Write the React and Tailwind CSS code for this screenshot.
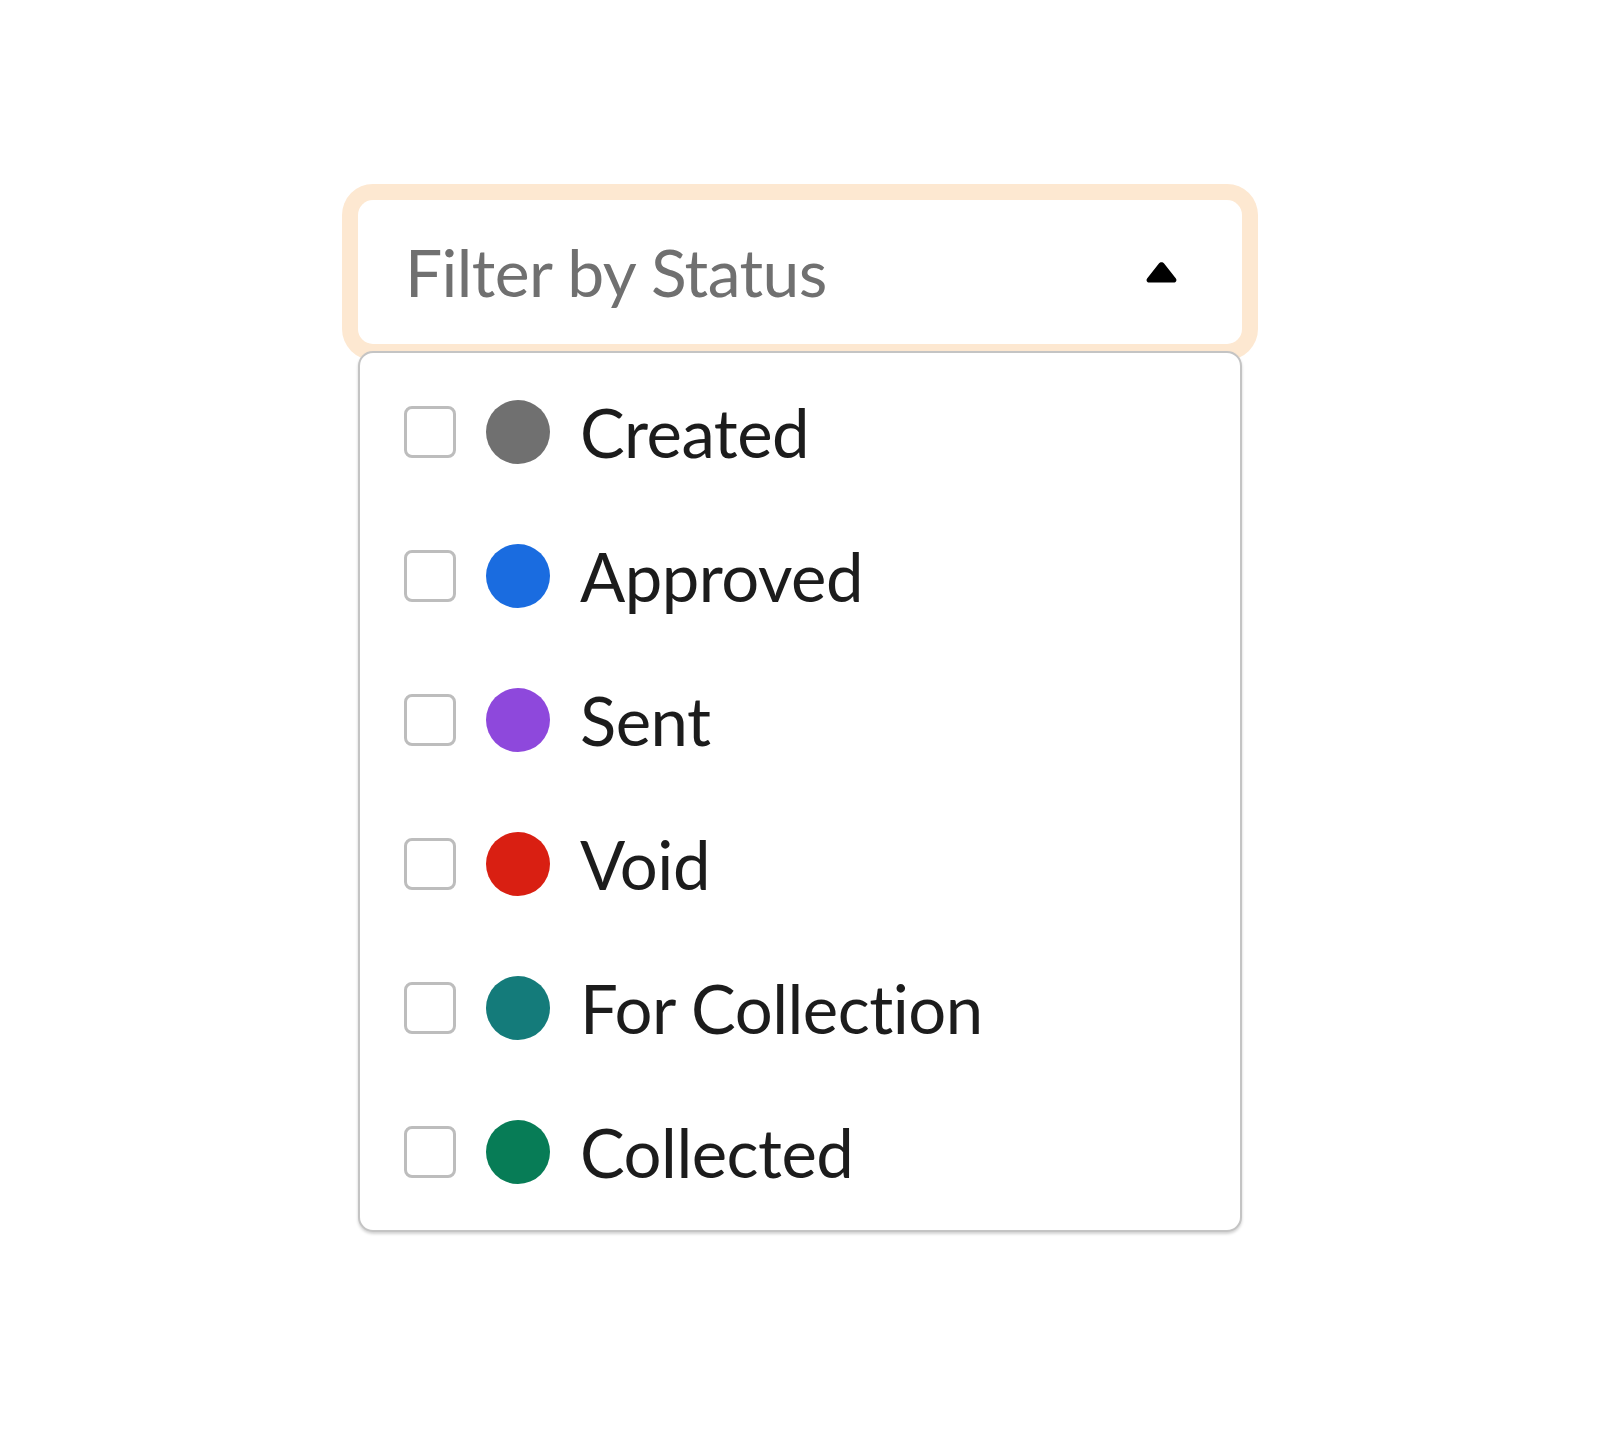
import { useState } from 'react';

const statuses = [
    { label: 'Created', color: 'bg-[#707070]' },
    { label: 'Approved', color: 'bg-[#1a6ce0]' },
    { label: 'Sent', color: 'bg-[#8e48dc]' },
    { label: 'Void', color: 'bg-[#d91f12]' },
    { label: 'For Collection', color: 'bg-[#147b7a]' },
    { label: 'Collected', color: 'bg-[#077c56]' },
];

const CaretUp = () => (
    <svg width="33" height="23" viewBox="0 0 33 23" className="block">
        <path
            d="M13.9 2.4c1.3-1.7 3.9-1.7 5.2 0l11.8 15c1.3 1.7.1 4.2-2.1 4.2H4.2c-2.2 0-3.4-2.5-2.1-4.2z"
            fill="#000"
        />
    </svg>
);

const App = () => {
    const [checked, setChecked] = useState({});

    const toggle = (label) => {
        setChecked((value) => ({ ...value, [label]: !value[label] }));
    };

    return (
        <div className="min-h-[1432px] w-full bg-white font-['Lato',sans-serif] pt-[200px] pl-[358px]">
            <div className="w-[884px] flex flex-col gap-[7px]">
                <button
                    type="button"
                    className="h-[144px] w-full flex items-center justify-between pl-[47px] pr-[64px] bg-white rounded-[15px] shadow-[0_0_0_16px_#fde8d1]"
                >
                    <span className="text-[66px] leading-none text-[#707070] tracking-[-0.6px]">Filter by Status</span>
                    <CaretUp />
                </button>
                <ul className="relative w-full pt-[7px] pb-[6px] bg-white border-2 border-[#c4c4c4] rounded-[15px] shadow-[0_2px_3px_rgba(0,0,0,0.18)]">
                    {statuses.map((status) => (
                        <li key={status.label}>
                            <label className="h-[144px] flex items-center pl-[44px] cursor-pointer">
                                <input
                                    type="checkbox"
                                    checked={!!checked[status.label]}
                                    onChange={() => toggle(status.label)}
                                    className="appearance-none w-[52px] h-[52px] border-[3px] border-[#bdbdbd] rounded-[8px] bg-white checked:bg-[#1a6ce0]"
                                />
                                <span className={`ml-[30px] w-[64px] h-[64px] rounded-full ${status.color}`} />
                                <span className="ml-[30px] text-[67px] leading-none text-[#1c1c1c] tracking-[-0.5px]">
                                    {status.label}
                                </span>
                            </label>
                        </li>
                    ))}
                </ul>
            </div>
        </div>
    );
};

export default App;
